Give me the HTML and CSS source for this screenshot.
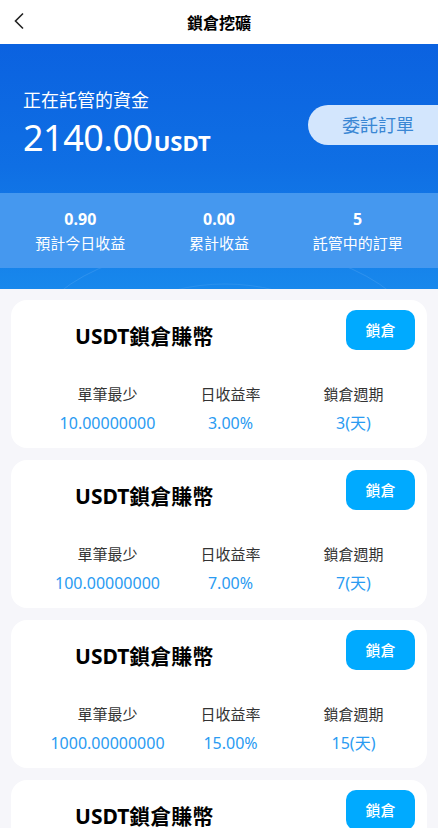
FILE: index.html
```html
<!DOCTYPE html>
<html lang="zh-Hant">
<head>
<meta charset="utf-8">
<title>鎖倉挖礦</title>
<link rel="stylesheet" href="styles.css">
</head>
<body>
<header class="topbar">
  <svg class="back" width="12" height="18" viewBox="0 0 12 18"><path d="M10 1.5 L2.5 9 L10 16.5" fill="none" stroke="#222" stroke-width="1.6"/></svg>
  <h1 class="title">鎖倉挖礦</h1>
</header>

<section class="hero">
  <svg class="deco" width="438" height="150" viewBox="0 0 438 150">
    <ellipse cx="225" cy="160" rx="200" ry="110" fill="none" stroke="rgba(255,255,255,0.10)" stroke-width="1"/>
    <ellipse cx="225" cy="170" rx="130" ry="80" fill="none" stroke="rgba(255,255,255,0.08)" stroke-width="1"/>
    <circle cx="119" cy="31" r="2" fill="rgba(255,255,255,0.55)"/>
    <circle cx="216" cy="32" r="1.3" fill="rgba(255,255,255,0.5)"/>
    <circle cx="268" cy="32" r="1.8" fill="rgba(255,255,255,0.5)"/>
    <circle cx="332" cy="41" r="1.8" fill="rgba(255,255,255,0.55)"/>
    <circle cx="182" cy="51" r="1.8" fill="rgba(255,255,255,0.45)"/>
    <circle cx="414" cy="58" r="1.8" fill="rgba(255,255,255,0.45)"/>
    <circle cx="34" cy="6" r="1.6" fill="rgba(255,255,255,0.4)"/>
    <circle cx="93" cy="1" r="1.6" fill="rgba(255,255,255,0.4)"/>
  </svg>
  <div class="hero-main">
    <div class="fund">
      <div class="fund-label">正在託管的資金</div>
      <div class="fund-amount">2140.00<span class="unit">USDT</span></div>
    </div>
    <div class="entrust">委託訂單</div>
  </div>
  <div class="stats">
    <div class="stat"><div class="stat-val">0.90</div><div class="stat-lbl">預計今日收益</div></div>
    <div class="stat"><div class="stat-val">0.00</div><div class="stat-lbl">累計收益</div></div>
    <div class="stat"><div class="stat-val">5</div><div class="stat-lbl">託管中的訂單</div></div>
  </div>
</section>

<main class="list">
  <div class="card">
    <div class="card-top"><div class="card-title">USDT鎖倉賺幣</div><div class="lock-btn">鎖倉</div></div>
    <div class="card-grid">
      <div class="cell"><div class="c-lbl">單筆最少</div><div class="c-val">10.00000000</div></div>
      <div class="cell"><div class="c-lbl">日收益率</div><div class="c-val">3.00%</div></div>
      <div class="cell"><div class="c-lbl">鎖倉週期</div><div class="c-val">3(天)</div></div>
    </div>
  </div>
  <div class="card">
    <div class="card-top"><div class="card-title">USDT鎖倉賺幣</div><div class="lock-btn">鎖倉</div></div>
    <div class="card-grid">
      <div class="cell"><div class="c-lbl">單筆最少</div><div class="c-val">100.00000000</div></div>
      <div class="cell"><div class="c-lbl">日收益率</div><div class="c-val">7.00%</div></div>
      <div class="cell"><div class="c-lbl">鎖倉週期</div><div class="c-val">7(天)</div></div>
    </div>
  </div>
  <div class="card">
    <div class="card-top"><div class="card-title">USDT鎖倉賺幣</div><div class="lock-btn">鎖倉</div></div>
    <div class="card-grid">
      <div class="cell"><div class="c-lbl">單筆最少</div><div class="c-val">1000.00000000</div></div>
      <div class="cell"><div class="c-lbl">日收益率</div><div class="c-val">15.00%</div></div>
      <div class="cell"><div class="c-lbl">鎖倉週期</div><div class="c-val">15(天)</div></div>
    </div>
  </div>
  <div class="card">
    <div class="card-top"><div class="card-title">USDT鎖倉賺幣</div><div class="lock-btn">鎖倉</div></div>
    <div class="card-grid">
      <div class="cell"><div class="c-lbl">單筆最少</div><div class="c-val">5000.00000000</div></div>
      <div class="cell"><div class="c-lbl">日收益率</div><div class="c-val">20.00%</div></div>
      <div class="cell"><div class="c-lbl">鎖倉週期</div><div class="c-val">30(天)</div></div>
    </div>
  </div>
</main>
</body>
</html>
```

FILE: styles.css
```css
* { box-sizing: border-box; }
html, body { margin: 0; padding: 0; }
body {
  width: 438px;
  background: #f6f6fa;
  font-family: "Noto Sans", "Noto Sans CJK TC", sans-serif;
  overflow: hidden;
  height: 828px;
}
.topbar {
  height: 44px;
  background: #fff;
  display: flex;
  align-items: center;
  justify-content: center;
  position: relative;
}
.back { position: absolute; left: 13px; top: 12px; }
.title {
  margin: 0;
  font-size: 16px;
  font-weight: 700;
  color: #000;
  letter-spacing: 0;
}
.hero {
  position: relative;
  background: linear-gradient(180deg, #0b62e0 0%, #0f6fe4 50%, #1888ec 100%);
  padding-top: 44px;
  padding-bottom: 21px;
  color: #fff;
  overflow: hidden;
}
.deco { position: absolute; left: 0; top: 150px; }
.hero-main {
  position: relative;
  display: flex;
  justify-content: space-between;
  align-items: flex-start;
  padding-left: 23px;
  height: 105px;
}
.fund-label { font-size: 18px; line-height: 24px; }
.fund-amount {
  font-size: 36px;
  line-height: 44px;
  margin-top: 4px;
  letter-spacing: -0.5px;
}
.unit { font-size: 22px; font-weight: 700; letter-spacing: 0; margin-left: 1px; }
.entrust {
  margin-top: 17px;
  width: 150px;
  margin-right: -20px;
  height: 40px;
  border-radius: 20px;
  background: #d3e6fd;
  color: #3a87d4;
  font-size: 18px;
  line-height: 40px;
  padding-left: 34px;
}
.stats {
  position: relative;
  background: #4598ef;
  height: 75px;
  display: grid;
  grid-template-columns: repeat(3, 1fr);
  padding: 0 11px;
  align-content: center;
  text-align: center;
}
.stat-val { font-size: 16px; font-weight: 700; line-height: 22px; }
.stat-lbl { font-size: 15px; line-height: 22px; margin-top: 2px; }
.list {
  padding: 11px 11px 0;
  display: flex;
  flex-direction: column;
  gap: 12px;
}
.card {
  background: #fff;
  border-radius: 16px;
  height: 148px;
  flex-shrink: 0;
  padding: 10px 12px 0 0;
}
.card-top {
  display: flex;
  justify-content: space-between;
  align-items: flex-start;
}
.card-title {
  padding-left: 64px;
  margin-top: 12px;
  font-size: 21px;
  font-weight: 700;
  line-height: 28px;
  color: #000;
}
.lock-btn {
  width: 69px;
  height: 40px;
  border-radius: 10px;
  background: #00aaff;
  color: #fff;
  font-size: 15px;
  font-weight: 500;
  line-height: 40px;
  text-align: center;
}
.card-grid {
  display: grid;
  grid-template-columns: repeat(3, 1fr);
  padding-left: 35px;
  margin-top: 33px;
  text-align: center;
}
.c-lbl { font-size: 15px; line-height: 22px; color: #333; }
.c-val { font-size: 16px; line-height: 22px; color: #2a9bf2; margin-top: 7px; }
```
